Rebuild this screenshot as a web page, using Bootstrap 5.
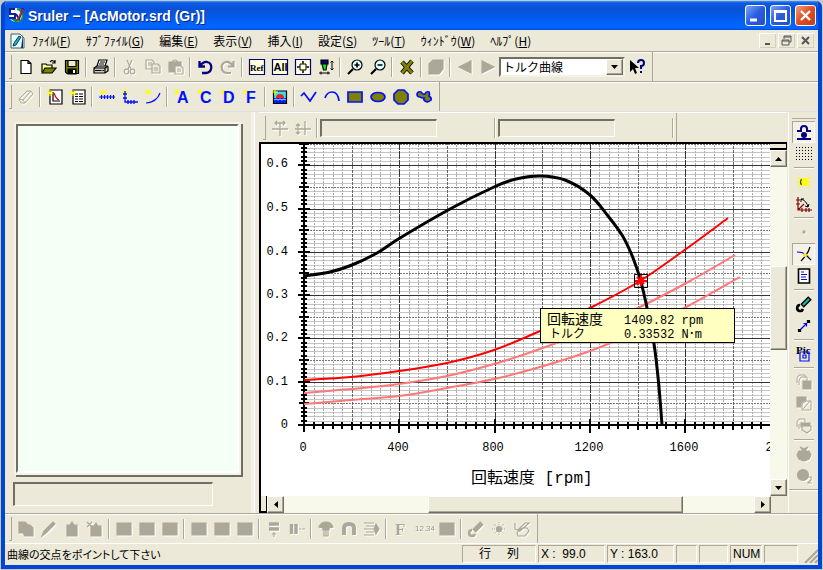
<!DOCTYPE html>
<html lang="ja">
<head>
<meta charset="utf-8">
<meta name="viewport" content="width=device-width, initial-scale=1">
<title>Sruler - [AcMotor.srd (Gr)]</title>
<link href="https://cdn.jsdelivr.net/npm/bootstrap@5.3.0/dist/css/bootstrap.min.css" rel="stylesheet">
<style>
:root{--face:#ece9d8;--shade:#aca899;--dark:#716f64;--blue:#0046d5}
html,body{height:100%}
body{background:#c3c8cc;padding:1px;overflow:hidden;font:13px/1 "Liberation Sans","Noto Sans CJK JP",sans-serif;color:#000}
.win{height:100%;background:var(--face);border:solid var(--blue);border-width:0 4px 4px;border-radius:6px 6px 0 0;overflow:hidden}
.titlebar{height:29px;margin:0 -4px;padding:0 6px 0 7px;background:linear-gradient(#3c94fa 0,#0a5be8 2px,#0a50d4 8px,#0060f8 20px,#0066ff 27px,#0046d5);color:#fff}
.titlebar h1{font:bold 14px/20px "Liberation Sans",sans-serif;text-shadow:1px 1px #00257a}
.cap{width:21px;height:21px;padding:0;border:1px solid #fff;border-radius:3px;background:linear-gradient(135deg,#7ea4f8,#2a5ce0 50%,#2450c8);display:flex}
.cap.shut{background:linear-gradient(135deg,#f0a080,#e04c20 50%,#c83c18)}
.menubar{height:21px;padding:0 4px 0 5px}
.menubar a{color:#000;text-decoration:none;line-height:18px;white-space:nowrap}
.menus{gap:15px;margin-left:7px;font-family:"Noto Sans CJK JP",sans-serif;font-size:12px}
.mdis{gap:2px}
.mdi{width:17px;height:15px;border:0;padding:0;background:var(--face);box-shadow:inset 1px 1px #fff,inset -1px -1px #d4d0c0;display:flex}
.bar{height:30px;padding:0 0 0 4px;border-top:1px solid var(--shade);box-shadow:inset 0 1px #fff}
.grip{width:3px;height:24px;border-right:1px solid var(--shade);border-bottom:1px solid var(--shade);margin-right:2px}
.tool{width:23px;height:22px;padding:0;border:0;background:none;display:flex;align-items:center;justify-content:center;flex:none}
.tool svg,.cap svg,.mdi svg,.arrow svg{display:block;margin:auto}
.tool svg{width:16px;height:16px;fill:none;stroke:#000;stroke-width:1.2;overflow:visible}
.tool:disabled svg{filter:drop-shadow(1px 1px 0 #fff);stroke:var(--shade)}
.tool.b svg{stroke:#0010ff;stroke-width:1.7}
.tool.on{box-shadow:inset 1px 1px var(--shade),inset -1px -1px #fff;background:#f4f2e6}
.fillg{fill:var(--shade);stroke:var(--shade)}
.olive{fill:#808000}
.nil{stroke:none}
.spark{stroke:#ff0;stroke-width:1}
.vsep{width:6px;height:20px;flex:none;background:linear-gradient(90deg,transparent 2px,var(--shade) 2px,var(--shade) 3px,#fff 3px,#fff 4px,transparent 4px)}
.hsep{height:6px;width:20px;flex:none;background:linear-gradient(transparent 2px,var(--shade) 2px,var(--shade) 3px,#fff 3px,#fff 4px,transparent 4px)}
.barend{width:1px;background:var(--shade);height:100%}
.glyph{font:bold 16px "Liberation Sans",sans-serif;fill:#0010ff;stroke:none}
.combo{width:126px;height:20px}
.combo select{appearance:none;width:100%;height:100%;padding:0 20px 0 2px;border:2px solid;border-color:var(--dark) #f4f2e8 #f4f2e8 var(--dark);background:#fff;border-radius:0;font:12px/16px "Noto Sans CJK JP",sans-serif;color:#000}
.arrow{border:1px solid;border-color:#fff var(--dark) var(--dark) #fff;background:var(--face);box-shadow:inset -1px -1px var(--shade);width:17px;height:17px;padding:0;display:flex;flex:none}
.combo .arrow{position:absolute;right:2px;top:2px;height:16px;pointer-events:none}
.sunk{border:solid;border-width:2px 1px 1px 2px;border-color:var(--dark) #fff #fff var(--dark);background:var(--face);border-radius:0;padding:0 4px;min-width:0}
.side{width:250px;border-right:1px solid #fff;box-shadow:inset -3px 0 #f4f2e8;padding:10px 12px 7px 8px;gap:5px}
.preview{background:#f4fff5;border:2px solid;border-color:var(--dark) #fff #fff var(--dark);outline:2px solid #f6f4ea;box-shadow:2px 2px 0 2px var(--dark);margin:2px 3px 4px 3px}
.preset{width:200px;height:24px}
.gbar{height:30px;border-top:1px solid #fff;padding-left:4px}
.gbar input{width:117px;height:18px}
.chartbox{border:solid #000;border-width:2px 0 0 2px;background:#fff}
.chartbox svg{width:100%;height:100%;display:block}
.track{background:#f8f9ea}
.thumb{background:var(--face);border:1px solid;border-color:#fff var(--dark) var(--dark) #fff;box-shadow:inset -1px -1px var(--shade)}
.vbar,.vbar .thumb{width:17px}
.vbar{border-top:1px solid #000}
.hbar{height:17px}
.splitv{height:7px;border:1px solid #000;border-width:1px 1px 2px 0;background:var(--face)}
.splith{width:8px;border:2px solid #000;border-width:0 1px 2px 2px;background:var(--face)}
.dock{width:30px;border-left:1px solid #fff;padding-top:9px;margin-left:1px}
.dockgrip{width:24px;border-bottom:1px solid var(--shade);height:3px;margin-top:-5px;margin-bottom:2px}
.status{height:22px;border-top:1px solid #fff;padding:1px 0 1px 2px;gap:2px;font-size:12px}
.status .msg{font:11px/18px "Noto Sans CJK JP",sans-serif;font-feature-settings:"palt"}
.cell{border:1px solid;border-color:var(--shade) #fff #fff var(--shade);height:18px;line-height:17px;padding:0 2px;white-space:pre}
.w-rc{width:74px}.w-xy{width:67px}.w-a{width:21px}.w-b{width:29px}.w-c{width:32px}.w-d{width:34px}
.ct{font-family:"Liberation Mono","Noto Sans CJK JP",monospace;font-size:12px;fill:#000}
.big{font-size:16px}
</style>
<script src="https://cdn.jsdelivr.net/npm/bootstrap@5.3.0/dist/js/bootstrap.bundle.min.js"></script>
</head>
<body>
<div class="win d-flex flex-column">
<header class="titlebar d-flex align-items-center flex-shrink-0">
 <svg width="16" height="17" viewBox="0 0 16 17"><circle cx="8" cy="8" r="7" fill="#f4fff4"/><path d="M3 12l5 4 5-4" fill="#109050"/><path d="M9 2a7 7 0 0 1 2 13" stroke="#109050" stroke-width="2" fill="none"/><path d="M7 2H2v5h5v4H1M8 7l3 5 4-11" fill="none" stroke="#1020a0" stroke-width="2"/><path d="M9 14l6-12" stroke="#e02020" stroke-width="1.5"/></svg>
 <h1 class="m-0 ms-1 flex-grow-1">Sruler − [AcMotor.srd (Gr)]</h1>
 <div class="d-flex gap-1 me-0">
 <button class="cap" aria-label="Minimize"><svg width="17" height="17"><path d="M3 13h7" stroke="#fff" stroke-width="3"/></svg></button>
 <button class="cap" aria-label="Maximize"><svg width="17" height="17"><path d="M3 4h11v10H3zM3 5h11" fill="none" stroke="#fff" stroke-width="2"/></svg></button>
 <button class="cap shut" aria-label="Close"><svg width="17" height="17"><path d="M4 4l9 9M13 4l-9 9" stroke="#fff" stroke-width="2.4"/></svg></button>
 </div>
</header>
<nav class="menubar d-flex align-items-center flex-shrink-0">
 <svg width="15" height="16" viewBox="0 0 15 16"><path d="M1 1h9l4 4v10H1z" fill="#e8fff8" stroke="#406070"/><path d="M13 1v14h-2z" fill="#103070"/><path d="M3 13l3-1 5-8-2-1-5 7z" fill="#20b0c0" stroke="#104060"/></svg>
 <div class="menus d-flex flex-grow-1">
 <a href="#">ﾌｧｲﾙ(<u>F</u>)</a><a href="#">ｻﾌﾞﾌｧｲﾙ(<u>G</u>)</a><a href="#">編集(<u>E</u>)</a><a href="#">表示(<u>V</u>)</a><a href="#">挿入(<u>I</u>)</a><a href="#">設定(<u>S</u>)</a><a href="#">ﾂｰﾙ(<u>T</u>)</a><a href="#">ｳｨﾝﾄﾞｳ(<u>W</u>)</a><a href="#">ﾍﾙﾌﾟ(<u>H</u>)</a>
 </div>
 <div class="mdis d-flex">
 <button class="mdi" aria-label="Minimize document"><svg width="13" height="13"><path d="M4 10h5" stroke="#555" stroke-width="2"/></svg></button>
 <button class="mdi" aria-label="Restore document"><svg width="13" height="13"><path d="M4 5V2h7v6H9M4 3h7M2 6h7v5H2zM2 7h7" fill="none" stroke="#555"/></svg></button>
 <button class="mdi" aria-label="Close document"><svg width="13" height="13"><path d="M3 3l7 7M10 3l-7 7" stroke="#555" stroke-width="2"/></svg></button>
 </div>
</nav>
<div class="bar d-flex align-items-center flex-shrink-0" role="toolbar" aria-label="標準">
 <i class="grip"></i>
 <button class="tool" aria-label="新規"><svg viewBox="0 0 16 16"><path d="M3 1.500h7l3 3v10H3zM10 1.500v3h3" fill="#fff"/></svg></button>
 <button class="tool" aria-label="開く"><svg viewBox="0 0 16 16"><path d="M1 13V5h4l1 1h5v3" fill="#ffff90"/><path d="M1 14l3-5h11l-4 5z" class="olive"/><path d="M9 3q3-3 5 1m0-3v3h-3"/></svg></button>
 <button class="tool" aria-label="保存"><svg viewBox="0 0 16 16"><path d="M1.500 1.500h13v13H3l-1.500-1.500z" class="olive"/><path d="M4 1.500h8v6H4z" fill="#ece9d8"/><path d="M4 10h8v5H4z" fill="#000"/><path d="M10 11v3" stroke="#fff" stroke-width="2"/></svg></button>
 <i class="vsep"></i>
 <button class="tool" aria-label="印刷"><svg viewBox="0 0 16 16"><path d="M4 7l2-6h8l-2 6" fill="#fff"/><path d="M7 3h5M6 5h5"/><path d="M1 9l3-2h10l1 1v4l-3 2H1z" fill="#ccc"/><path d="M1 9h11v5M12 9l3-2M2 11.500h9"/><path d="M8 12h2" stroke="#dd0"/></svg></button>
 <i class="vsep"></i>
 <button class="tool" disabled aria-label="切り取り"><svg viewBox="0 0 16 16"><path d="M5 1l4 9M10 1L6 10"/><circle cx="4.500" cy="12.500" r="2.300"/><circle cx="10.500" cy="12.500" r="2.300"/></svg></button>
 <button class="tool" disabled aria-label="コピー"><svg viewBox="0 0 16 16"><path d="M1 1h6l2 2v7H1zM3 4h4M3 6h4" /><path d="M7 5h6l2 2v7H7z" fill="#ece9d8"/><path d="M9 9h4M9 11h4"/></svg></button>
 <button class="tool" disabled aria-label="貼り付け"><svg viewBox="0 0 16 16"><path d="M1 3h12v10H1z" class="fillg"/><path d="M4 3q3-4 6 0z" fill="#ece9d8"/><path d="M7 7h6l2 2v6H7z" fill="#f6f4ea"/><path d="M9 10h4M9 12h4"/></svg></button>
 <i class="vsep"></i>
 <button class="tool" aria-label="元に戻す"><svg viewBox="0 0 16 16"><path d="M2.500 2v5.500H8M3 7q3-4.500 7-4 4.500 1 4.300 5.500Q14 13.500 9 14H5" stroke="#000080" stroke-width="2.300"/></svg></button>
 <button class="tool" disabled aria-label="やり直し"><svg viewBox="0 0 16 16"><path d="M13.500 2v5.500H8M13 7q-3-4.500-7-4-4.500 1-4.300 5.500Q2 13.500 7 14h4" stroke-width="2.200"/></svg></button>
 <i class="vsep"></i>
 <button class="tool" aria-label="Ref"><svg viewBox="0 0 16 16"><path d="M.5.5h15v15H.5z" fill="#ffffe0" stroke="#000070"/><text x="1" y="12" font-size="9" font-weight="bold" font-family="Liberation Serif" fill="#000" stroke="none">Ref</text></svg></button>
 <button class="tool" aria-label="All"><svg viewBox="0 0 16 16"><path d="M.5.5h15v15H.5z" fill="#ffffe0" stroke="#000070"/><text x="1.500" y="12" font-size="11" font-weight="bold" font-family="Liberation Sans" fill="#000" stroke="none">All</text></svg></button>
 <button class="tool" aria-label="全体表示"><svg viewBox="0 0 16 16"><path d="M.5.5h15v15H.5z" fill="#ffffe8" stroke="#000070"/><path d="M5 5h6v6H5zM8 2v3M8 11v3M2 8h3M11 8h3M7 3h2M7 13h2M3 7v2M13 7v2" stroke-width="1"/></svg></button>
 <button class="tool" aria-label="ペン幅"><svg viewBox="0 0 16 16"><path d="M3 1h7v4H3z" fill="#000080"/><path d="M4 5h5l-1 6H5.500z" fill="#0e0"/><path d="M1 14h11M3 12.500v3M10 12.500v3M14 2v9M12.500 3.500L14 2l1.500 1.500M12.500 9.500L14 11l1.500-1.500" stroke-width="1"/></svg></button>
 <i class="vsep"></i>
 <button class="tool" aria-label="拡大"><svg viewBox="0 0 16 16"><circle cx="10" cy="6" r="5" fill="#dff"/><path d="M1 15l5-5" stroke-width="2.200"/><path d="M10 3.500v5M7.500 6h5" stroke-width="1.700"/></svg></button>
 <button class="tool" aria-label="縮小"><svg viewBox="0 0 16 16"><circle cx="10" cy="6" r="5" fill="#dff"/><path d="M1 15l5-5" stroke-width="2.200"/><path d="M7.500 6h5" stroke-width="1.700"/></svg></button>
 <i class="vsep"></i>
 <button class="tool" aria-label="削除"><svg viewBox="0 0 16 16"><path d="M3 3l10 11M13 2L3 14" stroke="#000" stroke-width="4.600"/><path d="M3 3l10 11M13 2L3 14" stroke="#808000" stroke-width="3"/></svg></button>
 <i class="vsep"></i>
 <button class="tool" disabled aria-label="図形"><svg viewBox="0 0 16 16"><path d="M1 5l4-4h10v9l-4 5H1z" class="fillg"/></svg></button>
 <i class="vsep"></i>
 <button class="tool" disabled aria-label="前へ"><svg viewBox="0 0 16 16"><path d="M14 2v12L2 8z" class="fillg"/></svg></button>
 <button class="tool" disabled aria-label="次へ"><svg viewBox="0 0 16 16"><path d="M2 2v12l12-6z" class="fillg"/></svg></button>
 <div class="combo position-relative"><select aria-label="曲線"><option>トルク曲線</option></select><span class="arrow"><svg width="7" height="4"><path d="M0 0h7L3.500 4z"/></svg></span></div>
 <button class="tool" aria-label="ヘルプ"><svg viewBox="0 0 16 16"><path d="M1 1v12l3-3 2 5 2-1-2-5h4z" fill="#000" class="nil"/><path d="M9 4q0-3 3-3t3 3-3 3v3M12 12v2" stroke="#000080" stroke-width="2"/></svg></button>
 <i class="barend ms-1"></i>
</div>
<div class="bar d-flex align-items-center flex-shrink-0" role="toolbar" aria-label="作図">
 <i class="grip"></i>
 <button class="tool" disabled aria-label="消しゴム"><svg viewBox="0 0 16 16"><path d="M1 10l8-8h4l2 3-8 9H3zM1 10l4 1 2 3M5 11l8-9" stroke-width="1"/></svg></button>
 <i class="vsep"></i>
 <button class="tool" aria-label="グラフ頁"><svg viewBox="0 0 16 16"><path d="M3 1h12v14H3z" fill="#fff"/><path d="M6 3v9h7"/><path d="M7 4q2 6 5 7" stroke="#d00"/><path d="M0 4h6M3 1v6M1 2l4 4M5 2L1 6" class="spark"/></svg></button>
 <button class="tool" aria-label="文書頁"><svg viewBox="0 0 16 16"><path d="M3 1h12v14H3z" fill="#fff"/><path d="M5 5h3M9 5h4M5 7.500h3M9 7.500h4M5 10h3M9 10h4M5 12.500h3M9 12.500h4"/><path d="M0 4h6M3 1v6M1 2l4 4M5 2L1 6" class="spark"/></svg></button>
 <i class="vsep"></i>
 <button class="tool b" aria-label="軸"><svg viewBox="0 0 16 16"><path d="M1 3h6M4 0v6M2 1l4 4M6 1L2 5" class="spark"/><path d="M0 8h16M2.500 6v4M5.500 6v4M8.500 6v4M11.500 6v4M14.500 6v4" stroke-width="1.200"/></svg></button>
 <button class="tool b" aria-label="座標軸"><svg viewBox="0 0 16 16"><path d="M0 3h6M3 0v6M1 1l4 4M5 1L1 5" class="spark"/><path d="M3 2v11h13M1 5h4M1 9h4M6 11v4M9 11v4M12 11v4" stroke-width="1.300"/></svg></button>
 <button class="tool b" aria-label="曲線"><svg viewBox="0 0 16 16"><path d="M1 14q11-1 14-10" stroke-width="1.200"/><path d="M0 3h6M3 0v6M1 1l4 4M5 1L1 5" class="spark"/></svg></button>
 <i class="vsep"></i>
 <button class="tool"><svg viewBox="0 0 16 16"><path d="M0 3h6M3 0v6M1 1l4 4M5 1L1 5" class="spark"/><text class="glyph" x="3" y="14">A</text></svg></button>
 <button class="tool"><svg viewBox="0 0 16 16"><path d="M0 3h6M3 0v6M1 1l4 4M5 1L1 5" class="spark"/><text class="glyph" x="3" y="14">C</text></svg></button>
 <button class="tool"><svg viewBox="0 0 16 16"><path d="M0 3h6M3 0v6M1 1l4 4M5 1L1 5" class="spark"/><text class="glyph" x="3" y="14">D</text></svg></button>
 <button class="tool"><svg viewBox="0 0 16 16"><path d="M0 3h6M3 0v6M1 1l4 4M5 1L1 5" class="spark"/><text class="glyph" x="3" y="14">F</text></svg></button>
 <i class="vsep"></i>
 <button class="tool" aria-label="画像"><svg viewBox="0 0 16 16"><path d="M1.500 2h13v12.500h-13z" fill="#30e0f0"/><path d="M2 9h12v5H2z" fill="#0020f0" class="nil"/><path d="M4 9a4 4 0 0 1 8 0z" fill="#f02020" class="nil"/><path d="M2 11l2-1 2 1 2-1 2 1 2-1 2 1" stroke="#fff" stroke-width=".8"/><path d="M0 3h6M3 0v6" class="spark"/></svg></button>
 <i class="vsep"></i>
 <button class="tool b" aria-label="折れ線"><svg viewBox="0 0 16 16"><path d="M0 7l3-3 6 8 6-9"/></svg></button>
 <button class="tool b" aria-label="円弧"><svg viewBox="0 0 16 16"><path d="M1 9q2-6 7-6 6 0 7 9"/></svg></button>
 <button class="tool b" aria-label="四角形"><svg viewBox="0 0 16 16"><path d="M1 3h14v10H1z" class="olive"/></svg></button>
 <button class="tool b" aria-label="楕円"><svg viewBox="0 0 16 16"><ellipse cx="8" cy="8" rx="7" ry="4.500" class="olive"/></svg></button>
 <button class="tool b" aria-label="多角形"><svg viewBox="0 0 16 16"><path d="M5 1h6l4 4v6l-4 4H5l-4-4V5z" class="olive"/></svg></button>
 <button class="tool b" aria-label="自由図形"><svg viewBox="0 0 16 16"><path d="M1 5q1-3 4-2 2 3 4 2 1-3 4-2 1 2 0 4 3 2 2 4-3 3-6 1-2-2-1-3-3 0-4-1-3 0-3-3z" class="olive"/></svg></button>
 <i class="barend ms-1"></i>
</div>
<main class="d-flex flex-grow-1 border-top" style="min-height:0">
 <section class="side d-flex flex-column flex-shrink-0" aria-label="一覧">
 <div class="preview flex-grow-1"></div>
 <input class="sunk preset" readonly aria-label="項目">
 </section>
 <section class="d-flex flex-column flex-grow-1 ps-1" style="min-width:0">
 <div class="gbar d-flex align-items-center flex-shrink-0">
  <i class="grip"></i>
  <button class="tool" disabled aria-label="横位置"><svg viewBox="0 0 16 16"><path d="M0 9h16M8 3v13M3 3h10M5 1L3 3l2 2M11 1l2 2-2 2" stroke-width="1.300"/></svg></button>
  <button class="tool" disabled aria-label="縦位置"><svg viewBox="0 0 16 16"><path d="M0 9h16M10 1v14M3 4v10M1 6l2-2 2 2M1 12l2 2 2-2" stroke-width="1.300"/></svg></button>
  <i class="vsep"></i>
  <input class="sunk" readonly aria-label="X値"><i class="flex-fill"></i><i class="vsep"></i>
  <input class="sunk" readonly aria-label="Y値"><i class="flex-fill"></i><i class="vsep"></i><i class="barend"></i><i class="flex-fill"></i><i class="flex-fill"></i>
 </div>
 <div class="d-flex flex-grow-1" style="min-height:0">
  <div class="chartbox flex-grow-1" style="min-width:0">
  <svg id="chart" viewBox="261 145 509 352" preserveAspectRatio="xMinYMin slice" role="img" aria-label="トルク曲線グラフ">
   <g shape-rendering="crispEdges" fill="none" stroke-width="1">
   <path id="hMinor" stroke="#c4c4c4"/><path id="vMinor" stroke="#aaa" stroke-dasharray="2 1"/>
   <path id="hMid" stroke="#777" stroke-dasharray="2 1"/><path id="vMid" stroke="#666" stroke-dasharray="3 1"/>
   <path id="hMajor" stroke="#333"/><path id="vMajor" stroke="#333" stroke-dasharray="8 1"/>
   <path id="ticks" stroke="#000" stroke-width="2"/>
   <path d="M298 426H770M304 143V433" stroke="#000" stroke-width="2"/>
   </g>
   <g fill="none">
   <path id="c3" stroke="#f77" stroke-width="2"/><path id="c2" stroke="#f77" stroke-width="2"/>
   <path id="c0" stroke="#000" stroke-width="3"/><path id="c1" stroke="#f00" stroke-width="2"/>
   <path d="M634.500 275.500h13v13h-13z" stroke="#000"/>
   <path d="M635 282h12M641 276v11M637 278l7 7M644 278l-7 8" stroke="#f00" stroke-width="2"/>
   </g>
   <g class="ct" text-anchor="end"><text x="288" y="168">0.6</text><text x="288" y="212">0.5</text><text x="288" y="256">0.4</text><text x="288" y="299">0.3</text><text x="288" y="342">0.2</text><text x="288" y="386">0.1</text><text x="288" y="429">0</text></g>
   <g class="ct" text-anchor="middle"><text x="303" y="452">0</text><text x="398" y="452">400</text><text x="493" y="452">800</text><text x="589" y="452">1200</text><text x="684" y="452">1600</text><text x="780" y="452">2000</text></g>
   <text class="ct big" x="471" y="484" xml:space="preserve">回転速度 [rpm]</text>
   <path d="M540.500 309.500h194v34h-194z" fill="#ffffc0" stroke="#000" shape-rendering="crispEdges"/>
   <g class="ct" xml:space="preserve"><text x="547" y="325" font-size="14">回転速度</text><text x="549" y="339">トルク</text><text x="624" y="325">1409.82 rpm</text><text x="624" y="339">0.33532 N･m</text></g>
  </svg>
  </div>
  <div class="vbar track d-flex flex-column flex-shrink-0">
  <div class="splitv"></div>
  <button class="arrow" aria-label="上へ"><svg width="7" height="4"><path d="M0 4h7L3.500 0z"/></svg></button>
  <div style="flex:100"></div><div class="thumb" style="flex:83"></div><div style="flex:130"></div>
  <button class="arrow" aria-label="下へ"><svg width="7" height="4"><path d="M0 0h7L3.500 4z"/></svg></button>
  </div>
 </div>
 <div class="hbar d-flex flex-shrink-0">
  <div class="splith"></div>
  <button class="arrow" aria-label="左へ"><svg width="4" height="7"><path d="M4 0v7L0 3.500z"/></svg></button>
  <div class="track" style="flex:145"></div><div class="thumb" style="flex:254"></div><div class="track" style="flex:71"></div>
  <button class="arrow me-3" aria-label="右へ"><svg width="4" height="7"><path d="M0 0v7l4-3.500z"/></svg></button>
 </div>
 </section>
 <aside class="dock d-flex flex-column align-items-center flex-shrink-0" role="toolbar" aria-label="補助">
 <i class="dockgrip"></i>
 <button class="tool on" aria-label="吸着"><svg viewBox="0 0 16 16"><path d="M1 7h4V5q0-3 3-3t3 3v2h4" stroke="#000080" stroke-width="2"/><circle cx="8" cy="11" r="3" fill="#000080" class="nil"/><path d="M1 15h14" stroke="#000080" stroke-width="2"/></svg></button>
 <button class="tool" aria-label="グリッド"><svg viewBox="0 0 16 16" shape-rendering="crispEdges"><path d="M0 1.500h16M0 4.500h16M0 7.500h16M0 10.500h16M0 13.500h16" stroke-width="1" stroke-dasharray="1 2"/></svg></button>
 <i class="hsep"></i>
 <button class="tool" aria-label="点"><svg viewBox="0 0 16 16"><path d="M0 8h16M2 3l12 10M14 3L2 13" stroke="#ff0"/><circle cx="8" cy="8" r="4" fill="#ff0" class="nil"/><path d="M5.500 5q-2 3 0 6" stroke="#440"/></svg></button>
 <button class="tool" aria-label="角度"><svg viewBox="0 0 16 16"><path d="M2 1v13h14M0 4h4M0 8h4M6 12v4M10 12v4M13 12v4M2 14L8 8" stroke="#800000"/><path d="M5 3q6 2 7 8M5 6V3h3M9 10l3 1 1-3" stroke-width="1"/></svg></button>
 <i class="hsep"></i>
 <button class="tool" disabled aria-label="中点"><svg viewBox="0 0 16 16"><path d="M6.500 6.500h3v3h-3z" class="fillg nil"/></svg></button>
 <button class="tool on" aria-label="交点"><svg viewBox="0 0 16 16"><path d="M14 1Q12 8 5 15M9 8l6 6" stroke-width="1.200"/><path d="M1 6q7 0 8 3" stroke="#00f"/><circle cx="9" cy="9" r="2" fill="#fe0" class="nil"/></svg></button>
 <button class="tool" aria-label="一覧表"><svg viewBox="0 0 16 16"><path d="M2.500 1h11v14h-11z" fill="#fff" stroke-width="1.600"/><path d="M5 4h3M5 6.500h6M5 9h5M5 11.500h6" stroke="#0010d0" stroke-width="1.100"/></svg></button>
 <i class="hsep"></i>
 <button class="tool" aria-label="設定"><svg viewBox="0 0 16 16"><path d="M6 10l8-8" stroke-width="5"/><path d="M7 9l6-6" stroke="#10c0c0" stroke-width="2"/><path d="M7 13a3 3 0 1 1-3-4" stroke-width="2.600"/></svg></button>
 <button class="tool" aria-label="結ぶ"><svg viewBox="0 0 16 16"><path d="M4 12l7-7" stroke="#00f"/><path d="M11.500 2.500h2v2h-2zM2.500 11.500h2v2h-2z" fill="#000"/><path d="M7.500 5.500h3v3" stroke="#00f"/></svg></button>
 <i class="hsep"></i>
 <button class="tool" aria-label="Pic"><svg viewBox="0 0 16 16"><text x="0" y="8" font-size="11" font-weight="bold" font-family="Liberation Serif" fill="#000" stroke="none">Pic</text><path d="M4 6h9v9H4zM7 9h3v3H7z" stroke="#0010ff"/></svg></button>
 <i class="hsep"></i>
 <button class="tool" disabled aria-label="前面"><svg viewBox="0 0 16 16"><path d="M1 9V4l2-3h6v3M3 11V6l2-3h6v4" stroke-width="1"/><path d="M7 7h8v8H7z" class="fillg"/></svg></button>
 <button class="tool" disabled aria-label="背面"><svg viewBox="0 0 16 16"><path d="M1 1h9v3l-5 3v4H1z" class="fillg"/><path d="M6 8l4-3h5v9H6zM7 13l7-8" stroke-width="1"/></svg></button>
 <button class="tool" disabled aria-label="重なり"><svg viewBox="0 0 16 16"><path d="M1 9V4l2-3h6v3M3 11V6" stroke-width="1"/><path d="M5 5h9v4H5z" class="fillg"/><path d="M6 8h9v4l-4 3-5-3z" fill="#ece9d8"/></svg></button>
 <i class="hsep"></i>
 <button class="tool" disabled aria-label="まとめ"><svg viewBox="0 0 16 16"><path d="M3 5h10l2 4-2 4-4 2H7l-4-2-2-4zM8 6L4 1l4 2 4-2-3 4" class="fillg"/></svg></button>
 <button class="tool" disabled aria-label="分解"><svg viewBox="0 0 16 16"><circle cx="7" cy="7" r="5.500" class="fillg"/><path d="M11 9h4v3l-3 3h4" /></svg></button>
 <i class="hsep w-100"></i>
 </aside>
</main>
<div class="bar d-flex align-items-center flex-shrink-0" role="toolbar" aria-label="編集">
 <i class="grip"></i>
 <button class="tool" disabled aria-label="複写"><svg viewBox="0 0 16 16"><path d="M1 1h6l3 3h2l3 3v8H7l-2-3H1z" class="fillg"/></svg></button>
 <button class="tool" disabled aria-label="ペン"><svg viewBox="0 0 16 16"><path d="M1 15l2-5 9-9 2 2-9 9z" class="fillg"/></svg></button>
 <button class="tool" disabled aria-label="貼付"><svg viewBox="0 0 16 16"><path d="M3 4h3l2-3 2 3h3v11H3z" class="fillg"/></svg></button>
 <button class="tool" disabled aria-label="新規貼付"><svg viewBox="0 0 16 16"><path d="M4 5h3l2-3 2 3h3v10H4z" class="fillg"/><path d="M0 1l5 5M5 1L0 6"/></svg></button>
 <i class="vsep"></i>
 <button class="tool" disabled aria-label="配置1"><svg viewBox="0 0 16 16"><path d="M1 2h14v12H1z" class="fillg"/></svg></button>
 <button class="tool" disabled aria-label="配置2"><svg viewBox="0 0 16 16"><path d="M1 2h14v12H1z" class="fillg"/></svg></button>
 <button class="tool" disabled aria-label="配置3"><svg viewBox="0 0 16 16"><path d="M1 2h14v12H1z" class="fillg"/></svg></button>
 <i class="vsep"></i>
 <button class="tool" disabled aria-label="配置4"><svg viewBox="0 0 16 16"><path d="M1 2h14v12H1z" class="fillg"/></svg></button>
 <button class="tool" disabled aria-label="配置5"><svg viewBox="0 0 16 16"><path d="M1 2h14v12H1z" class="fillg"/></svg></button>
 <button class="tool" disabled aria-label="配置6"><svg viewBox="0 0 16 16"><path d="M1 2h14v12H1z" class="fillg"/></svg></button>
 <i class="vsep"></i>
 <button class="tool" disabled aria-label="縦間隔"><svg viewBox="0 0 16 16"><path d="M3 3h10M3 8h10" stroke-width="3.400"/><path d="M6 13h4M8 11v5"/></svg></button>
 <button class="tool" disabled aria-label="横間隔"><svg viewBox="0 0 16 16"><path d="M2.500 3v10M7 3v10" stroke-width="3.400"/><path d="M10 8h2M13 8h3"/></svg></button>
 <i class="vsep"></i>
 <button class="tool" disabled aria-label="結合"><svg viewBox="0 0 16 16"><path d="M1 6q2-5 7-5t7 5l-4 1v2H5V7z" class="fillg"/><path d="M8 5v10M6 9v6h4V9"/></svg></button>
 <button class="tool" disabled aria-label="磁石"><svg viewBox="0 0 16 16"><path d="M3 14V7q0-4 5-4t5 4v7" stroke-width="4"/></svg></button>
 <button class="tool" disabled aria-label="整列"><svg viewBox="0 0 16 16"><path d="M0 2h10M2 5h8M0 8h10M2 11h8M0 14h10"/><path d="M12 3l3 5-3 5-2-5z" class="fillg"/></svg></button>
 <i class="vsep"></i>
 <button class="tool" disabled aria-label="フォント"><svg viewBox="0 0 16 16"><text x="2" y="14" font-size="17" font-weight="bold" font-family="Liberation Serif" fill="#aca899" stroke="none">F</text></svg></button>
 <button class="tool" disabled aria-label="数値書式"><svg viewBox="0 0 16 16"><text x="-1" y="10" font-size="8" font-family="Liberation Sans" fill="#9c988a" stroke="none">12.34</text></svg></button>
 <button class="tool" disabled aria-label="色"><svg viewBox="0 0 16 16"><path d="M1 2h14v12H1z" class="fillg"/></svg></button>
 <i class="vsep"></i>
 <button class="tool" disabled aria-label="調整"><svg viewBox="0 0 16 16"><path d="M6 10l8-8" stroke-width="5"/><path d="M7 13a3 3 0 1 1-3-4" stroke-width="2.600"/></svg></button>
 <button class="tool" disabled aria-label="輝点"><svg viewBox="0 0 16 16"><circle cx="8" cy="8" r="2.500" class="fillg"/><path d="M8 1v14M1 8h14M3 3l10 10M13 3L3 13" stroke-width="1" stroke-dasharray="1 1"/></svg></button>
 <button class="tool" disabled aria-label="塗り"><svg viewBox="0 0 16 16"><path d="M1 2v6l5 2 9-8h-4L4 9M3 12q4-6 10-5l2 3-4 5H4z"/></svg></button>
 <i class="barend ms-1"></i>
</div>
<footer class="status d-flex flex-shrink-0">
 <span class="msg flex-grow-1">曲線の交点をポイントして下さい</span>
 <span class="cell w-rc d-flex justify-content-center gap-3"><span>行</span><span>列</span></span>
 <span class="cell w-xy">X :  99.0</span>
 <span class="cell w-xy">Y : 163.0</span>
 <span class="cell w-a"></span>
 <span class="cell w-b"></span>
 <span class="cell w-c">NUM</span>
 <span class="cell w-d"></span>
 <svg class="ms-1 mt-1" width="14" height="14"><path d="M1 14L14 1M6 14l8-8M11 14l3-3" stroke="#aca899" stroke-width="2"/></svg>
</footer>
</div>
<script>
const X0=304,Y0=426,DX=9.53,DY=4.33,set=(id,d)=>document.getElementById(id).setAttribute('d',d);
const g={hMinor:'',hMid:'',hMajor:'',vMinor:'',vMid:'',vMajor:''};let ticks='';
const kind=(i)=>i%10===0?'Major':i%5===0?'Mid':'Minor';
for(let i=0;i<=65;i++){const y=Math.round(Y0-i*DY),k=kind(i),r={Major:6,Mid:5,Minor:3}[k];
 g['h'+k]+=`M304 ${y+.5}H770`;ticks+=`M${X0-r} ${y}h${2*r}`;}
for(let i=1;i<=48;i++){const x=Math.round(X0+i*DX),k=kind(i);
 g['v'+k]+=`M${x+.5} 143V426`;ticks+=k==='Major'?`M${x} 420v14`:k==='Mid'?`M${x} 423v8`:`M${x} 423v7`;}
for(const k in g)set(k,g[k]);set('ticks',ticks);
// Catmull-Rom spline through the sampled points
function curve(id,p){let d=`M${p[0]}`;for(let i=0;i<p.length-1;i++){const a=p[i-1]||p[i],b=p[i],c=p[i+1],e=p[i+2]||c;
 d+=`C${b[0]+(c[0]-a[0])/6} ${b[1]+(c[1]-a[1])/6} ${c[0]-(e[0]-b[0])/6} ${c[1]-(e[1]-b[1])/6} ${c[0]} ${c[1]}`;}set(id,d);}
curve('c0',[[304,277],[330,273],[352,266],[377,254],[400,239],[450,210],[494,188],[516,180],[540,177],[565,181],[590,196],[608,217],[622,236],[631,254],[637,270],[641,283],[646,304],[654,345],[658,378],[660,400],[662,426]]);
curve('c1',[[304,381],[351,378],[399,372],[447,364],[494,351],[540,332],[592,308],[640,282],[686,250],[728,219]]);
curve('c2',[[304,394],[351,390],[399,385],[447,377],[494,365],[540,350],[592,330],[640,308],[690,282],[735,256]]);
curve('c3',[[304,405],[351,401],[399,397],[447,389],[494,380],[540,368],[590,352],[640,331],[690,306],[740,278]]);
</script>
</body>
</html>
